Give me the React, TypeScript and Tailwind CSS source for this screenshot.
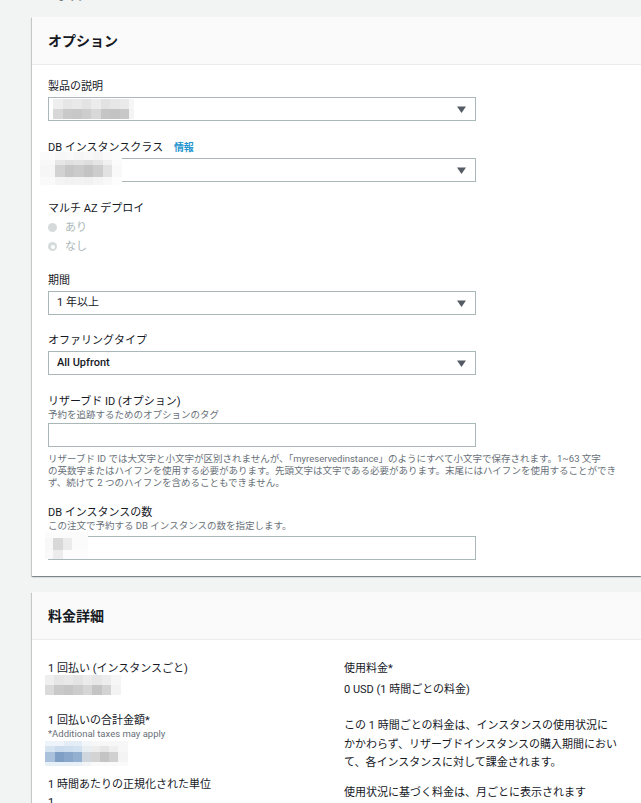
import type { ReactNode } from 'react'

type Row = { h: string; cells: string[] }

function Mosaic({ rows, className = '' }: { rows: Row[]; className?: string }) {
  return (
    <div className={'flex flex-col ' + className}>
      {rows.map((r, i) => (
        <div key={i} className={'flex ' + r.h}>
          {r.cells.map((c, j) => (
            <div key={j} className={'h-full ' + c} />
          ))}
        </div>
      ))}
    </div>
  )
}

function Arrow() {
  return (
    <svg width="9" height="7" viewBox="0 0 9 7" className="shrink-0">
      <path d="M0 0.5h9L4.5 7z" fill="#545b64" />
    </svg>
  )
}

function Select({ children }: { children?: ReactNode }) {
  return (
    <div className="mt-[3px] flex h-6 w-[428px] items-center justify-between border border-[#aab7b8] bg-white pl-2 pr-[9px]">
      <div className="flex items-center">{children}</div>
      <Arrow />
    </div>
  )
}

function Label({ children }: { children: ReactNode }) {
  return <label className="block pt-1 leading-[14px]">{children}</label>
}

function Card({ title, children }: { title: string; children: ReactNode }) {
  return (
    <section className="w-[609px] bg-white shadow-[0_1px_1px_0_rgba(0,28,36,0.3),1px_1px_1px_0_rgba(0,28,36,0.15),-1px_1px_1px_0_rgba(0,28,36,0.15)]">
      <header className="flex h-12 items-center border-b border-[#eaeded] bg-[#fafafa] px-4">
        <h2 className="text-[14px] font-bold leading-[18px]">{title}</h2>
      </header>
      {children}
    </section>
  )
}

const productRows: Row[] = [
  {
    h: 'h-[10px]',
    cells: ['w-[10px] bg-[#eeeeee]', 'w-[9px] bg-[#e6e6e6]', 'w-[10px] bg-[#e9e9e9]', 'w-[9px] bg-[#e3e3e3]', 'w-[10px] bg-[#ececec]', 'w-[9px] bg-[#e2e2e2]', 'w-[10px] bg-[#e7e7e7]', 'w-[9px] bg-[#eaeaea]', 'w-[5px] bg-[#f6f6f6]'],
  },
  {
    h: 'h-[10px]',
    cells: ['w-[10px] bg-[#d7d7d7]', 'w-[9px] bg-[#c9c9c9]', 'w-[10px] bg-[#c7c7c7]', 'w-[9px] bg-[#cdcdcd]', 'w-[10px] bg-[#d8d8d8]', 'w-[9px] bg-[#c5c5c5]', 'w-[10px] bg-[#c3c3c3]', 'w-[9px] bg-[#c8c8c8]', 'w-[5px] bg-[#f4f4f4]'],
  },
]

const classRows: Row[] = [
  {
    h: 'h-[8px]',
    cells: ['w-[15px] bg-[#fbfbfb]', 'w-[10px] bg-[#f7f7f7]', 'w-[9px] bg-[#f9f9f9]', 'w-[10px] bg-[#f6f6f6]', 'w-[9px] bg-[#f8f8f8]', 'w-[10px] bg-[#f5f5f5]', 'w-[9px] bg-[#fafafa]', 'w-[10px] bg-[#fcfcfc]'],
  },
  {
    h: 'h-[5px]',
    cells: ['w-[15px] bg-[#f8f8f8]', 'w-[10px] bg-[#e6e6e6]', 'w-[9px] bg-[#e0e0e0]', 'w-[10px] bg-[#e3e3e3]', 'w-[9px] bg-[#dedede]', 'w-[10px] bg-[#e5e5e5]', 'w-[9px] bg-[#f0f0f0]', 'w-[10px] bg-[#fbfbfb]'],
  },
  {
    h: 'h-[12px]',
    cells: ['w-[15px] bg-[#f6f6f6]', 'w-[10px] bg-[#d2d2d2]', 'w-[9px] bg-[#c6c6c6]', 'w-[10px] bg-[#cbcbcb]', 'w-[9px] bg-[#c4c4c4]', 'w-[10px] bg-[#cdcdcd]', 'w-[9px] bg-[#e2e2e2]', 'w-[10px] bg-[#f9f9f9]'],
  },
  {
    h: 'h-[8px]',
    cells: ['w-[15px] bg-[#fafafa]', 'w-[10px] bg-[#f4f4f4]', 'w-[9px] bg-[#f2f2f2]', 'w-[10px] bg-[#f3f3f3]', 'w-[9px] bg-[#f1f1f1]', 'w-[10px] bg-[#f5f5f5]', 'w-[9px] bg-[#f8f8f8]', 'w-[10px] bg-[#fdfdfd]'],
  },
]

const countRows: Row[] = [
  { h: 'h-[6px]', cells: ['w-[43px] bg-[#fbfbfb]'] },
  { h: 'h-[12px]', cells: ['w-[8px] bg-[#f8f8f8]', 'w-[10px] bg-[#d8d8d8]', 'w-[9px] bg-[#ebebeb]', 'w-[16px] bg-[#fbfbfb]'] },
  { h: 'h-[9px]', cells: ['w-[8px] bg-[#f9f9f9]', 'w-[10px] bg-[#ececec]', 'w-[25px] bg-[#fcfcfc]'] },
]

const upfrontRows: Row[] = [
  {
    h: 'h-[10px]',
    cells: ['w-[9px] bg-[#efefef]', 'w-[10px] bg-[#e6e6e6]', 'w-[9px] bg-[#e9e9e9]', 'w-[10px] bg-[#e4e4e4]', 'w-[9px] bg-[#ebebeb]', 'w-[10px] bg-[#e7e7e7]', 'w-[9px] bg-[#ededed]', 'w-[10px] bg-[#f6f6f6]'],
  },
  {
    h: 'h-[10px]',
    cells: ['w-[9px] bg-[#dadada]', 'w-[10px] bg-[#c9c9c9]', 'w-[9px] bg-[#c6c6c6]', 'w-[10px] bg-[#cccccc]', 'w-[9px] bg-[#d6d6d6]', 'w-[10px] bg-[#c4c4c4]', 'w-[9px] bg-[#d3d3d3]', 'w-[10px] bg-[#f3f3f3]'],
  },
]

const totalRows: Row[] = [
  { h: 'h-[5px]', cells: ['w-[19px] bg-[#eef4fa]', 'w-[18px] bg-[#e4edf6]', 'w-[9px] bg-[#f3f6f9]', 'w-[37px] bg-[#f7f7f7]'] },
  {
    h: 'h-[6px]',
    cells: ['w-[10px] bg-[#d6e4f1]', 'w-[9px] bg-[#c9dbed]', 'w-[9px] bg-[#cddeef]', 'w-[9px] bg-[#d3e2f1]', 'w-[9px] bg-[#e9eef3]', 'w-[9px] bg-[#ededed]', 'w-[9px] bg-[#e6e6e6]', 'w-[9px] bg-[#efefef]', 'w-[10px] bg-[#f7f7f7]'],
  },
  {
    h: 'h-[10px]',
    cells: ['w-[10px] bg-[#a9c1da]', 'w-[9px] bg-[#7f9fc5]', 'w-[9px] bg-[#88a7ca]', 'w-[9px] bg-[#94b0d0]', 'w-[9px] bg-[#cfd6de]', 'w-[9px] bg-[#d3d3d3]', 'w-[9px] bg-[#c4c4c4]', 'w-[9px] bg-[#d0d0d0]', 'w-[10px] bg-[#f4f4f4]'],
  },
  { h: 'h-[4px]', cells: ['w-[37px] bg-[#e7eff7]', 'w-[9px] bg-[#f2f4f6]', 'w-[37px] bg-[#fafafa]'] },
]

function Radio({ label, checked }: { label: string; checked?: boolean }) {
  return (
    <div className="flex h-[19px] items-center gap-2">
      <span className="flex h-[9px] w-[9px] items-center justify-center rounded-full bg-[#d5dbdb]">
        {checked && <span className="h-[4px] w-[4px] rounded-full bg-white" />}
      </span>
      <span className="text-[#aab7b8]">{label}</span>
    </div>
  )
}

export default function App() {
  return (
    <div className="min-h-screen overflow-hidden bg-[#f2f3f3] font-[Roboto,'Noto_Sans_CJK_JP',sans-serif] text-[11px] leading-[18px] text-[#16191f]">
      <div className="pl-8">
        <p className="-mt-3 pl-[3px] text-[#545b64]">ています。</p>

        <div className="mt-[11px]">
          <Card title="オプション">
            <div className="px-4 pb-4 pt-[11px]">
              <div>
                <Label>製品の説明</Label>
                <Select>
                  <Mosaic rows={productRows} className="-ml-[4px]" />
                </Select>
              </div>

              <div className="relative mt-4">
                <Label>
                  DB インスタンスクラス <a className="ml-2 text-[10px] font-bold text-[#1f95cf]">情報</a>
                </Label>
                <Select />
                <Mosaic rows={classRows} className="absolute -left-2 top-[15px]" />
              </div>

              <div className="mt-4">
                <Label>マルチ AZ デプロイ</Label>
                <div className="mt-[2px]">
                  <Radio label="あり" />
                  <Radio label="なし" checked />
                </div>
              </div>

              <div className="mt-[14px]">
                <Label>期間</Label>
                <Select>1 年以上</Select>
              </div>

              <div className="mt-[15px]">
                <Label>オファリングタイプ</Label>
                <Select>
                  <span className="font-medium">All Upfront</span>
                </Select>
              </div>

              <div className="mt-5">
                <label className="block leading-[14px]">リザーブド ID (オプション)</label>
                <p className="text-[9.5px] leading-[12px] text-[#687078]">予約を追跡するためのオプションのタグ</p>
                <div className="mt-[2px] h-6 w-[428px] border border-[#aab7b8] bg-white" />
                <p className="mt-[6px] whitespace-nowrap text-[9.5px] leading-[12px] text-[#687078]">
                  リザーブド ID では大文字と小文字が区別されませんが、「myreservedinstance」のようにすべて小文字で保存されます。1~63 文字
                  <br />
                  の英数字またはハイフンを使用する必要があります。先頭文字は文字である必要があります。末尾にはハイフンを使用することができ
                  <br />
                  ず、続けて 2 つのハイフンを含めることもできません。
                </p>
              </div>

              <div className="relative mt-[17px]">
                <label className="block leading-[14px]">DB インスタンスの数</label>
                <p className="text-[9.5px] leading-[12px] text-[#687078]">この注文で予約する DB インスタンスの数を指定します。</p>
                <div className="mt-1 h-6 w-[428px] border border-[#aab7b8] bg-white" />
                <Mosaic rows={countRows} className="absolute -left-[3px] top-[26px]" />
              </div>
            </div>
          </Card>
        </div>

        <div className="mt-4">
          <Card title="料金詳細">
            <div className="grid grid-cols-[296px_1fr] px-4 pb-4 pt-[19px]">
              <div className="pt-px">
                <div>1 回払い (インスタンスごと)</div>
                <Mosaic rows={upfrontRows} className="-ml-[3px] -mt-[3px]" />
                <div className="mt-[19px] leading-[14px]">1 回払いの合計金額*</div>
                <div className="text-[9.5px] leading-[12px] text-[#687078]">*Additional taxes may apply</div>
                <Mosaic rows={totalRows} className="-ml-[3px] mt-px" />
                <div className="mt-[10px]">1 時間あたりの正規化された単位</div>
                <div>1</div>
              </div>
              <div className="pt-px">
                <div>使用料金*</div>
                <div className="mt-[3px]">0 USD (1 時間ごとの料金)</div>
                <p className="mt-[18px] whitespace-nowrap leading-[18.5px]">
                  この 1 時間ごとの料金は、インスタンスの使用状況に
                  <br />
                  かかわらず、リザーブドインスタンスの購入期間におい
                  <br />
                  て、各インスタンスに対して課金されます。
                </p>
                <p className="mt-[11px]">使用状況に基づく料金は、月ごとに表示されます</p>
              </div>
            </div>
          </Card>
        </div>
      </div>
    </div>
  )
}
